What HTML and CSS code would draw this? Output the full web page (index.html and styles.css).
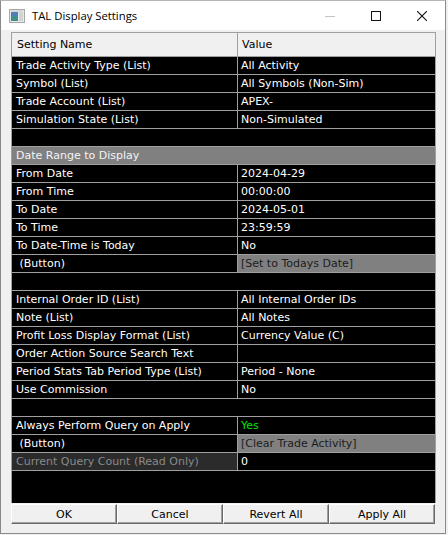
FILE: index.html
```html
<!DOCTYPE html>
<html>
<head>
	<meta charset="utf-8">
	<title>TAL Display Settings</title>
	<link rel="stylesheet" href="styles.css">
</head>
<body>

	<div class="ventana">
		<header class="titulo">
			<svg class="icono" width="16" height="14" viewBox="0 0 16 14">
				<rect x="0.5" y="0.5" width="15" height="13" fill="#e8e8e8" stroke="#a8a8a8"/>
				<rect x="2" y="3" width="7" height="9" fill="#3f8f8a"/>
				<rect x="2" y="3" width="7" height="4" fill="#4a7fb8"/>
				<rect x="10" y="3" width="4" height="9" fill="#cfd6d2"/>
				<rect x="2" y="1.5" width="12" height="1" fill="#c8c8c8"/>
			</svg>
			<span class="texto-titulo">TAL Display Settings</span>
			<div class="controles">
				<span class="control">
					<svg width="10" height="10" viewBox="0 0 10 10"><line x1="0" y1="5.5" x2="10" y2="5.5" stroke="#c4c4c4"/></svg>
				</span>
				<span class="control">
					<svg width="10" height="10" viewBox="0 0 10 10"><rect x="0.5" y="0.5" width="9" height="9" fill="none" stroke="#111"/></svg>
				</span>
				<span class="control">
					<svg width="10" height="10" viewBox="0 0 10 10"><path d="M0 0 L10 10 M10 0 L0 10" stroke="#111" stroke-width="1.1"/></svg>
				</span>
			</div>
		</header>

		<main class="cliente">
			<div class="tabla">
				<div class="fila cabecera"><div class="nombre">Setting Name</div><div class="valor">Value</div></div>

				<div class="fila"><div class="nombre">Trade Activity Type (List)</div><div class="valor">All Activity</div></div>
				<div class="fila"><div class="nombre">Symbol (List)</div><div class="valor">All Symbols (Non-Sim)</div></div>
				<div class="fila"><div class="nombre">Trade Account (List)</div><div class="valor">APEX-</div></div>
				<div class="fila"><div class="nombre">Simulation State (List)</div><div class="valor">Non-Simulated</div></div>
				<div class="fila vacia"></div>

				<div class="fila seccion"><div class="completa">Date Range to Display</div></div>
				<div class="fila"><div class="nombre">From Date</div><div class="valor">2024-04-29</div></div>
				<div class="fila"><div class="nombre">From Time</div><div class="valor">00:00:00</div></div>
				<div class="fila"><div class="nombre">To Date</div><div class="valor">2024-05-01</div></div>
				<div class="fila"><div class="nombre">To Time</div><div class="valor">23:59:59</div></div>
				<div class="fila"><div class="nombre">To Date-Time is Today</div><div class="valor">No</div></div>
				<div class="fila"><div class="nombre">&nbsp;(Button)</div><div class="valor boton-celda">[Set to Todays Date]</div></div>
				<div class="fila vacia"></div>

				<div class="fila"><div class="nombre">Internal Order ID (List)</div><div class="valor">All Internal Order IDs</div></div>
				<div class="fila"><div class="nombre">Note (List)</div><div class="valor">All Notes</div></div>
				<div class="fila"><div class="nombre">Profit Loss Display Format (List)</div><div class="valor">Currency Value (C)</div></div>
				<div class="fila"><div class="nombre">Order Action Source Search Text</div><div class="valor"></div></div>
				<div class="fila"><div class="nombre">Period Stats Tab Period Type (List)</div><div class="valor">Period - None</div></div>
				<div class="fila"><div class="nombre">Use Commission</div><div class="valor">No</div></div>
				<div class="fila vacia"></div>

				<div class="fila"><div class="nombre">Always Perform Query on Apply</div><div class="valor verde">Yes</div></div>
				<div class="fila"><div class="nombre">&nbsp;(Button)</div><div class="valor boton-celda">[Clear Trade Activity]</div></div>
				<div class="fila"><div class="nombre solo-lectura">Current Query Count (Read Only)</div><div class="valor">0</div></div>

				<div class="relleno"></div>
			</div>

			<div class="botones">
				<button>OK</button>
				<button>Cancel</button>
				<button>Revert All</button>
				<button>Apply All</button>
			</div>
		</main>
	</div>

</body>
</html>
```

FILE: styles.css
```css
body{
	margin: 0;
	background: #f0f0f0;
	font-family: 'DejaVu Sans', sans-serif;
	font-size: 11px;
}

/*--------Ventana-----------*/
.ventana{
	width: 446px;
	height: 534px;
	box-sizing: border-box;
	border: 1px solid #8a8a8a;
	border-top-color: #b5b5b5;
	background: #f0f0f0;
	display: flex;
	flex-direction: column;
}
.titulo{
	height: 29px;
	background: #fff;
	display: flex;
	align-items: center;
}
.icono{
	margin-left: 8px;
	margin-top: 1px;
}
.texto-titulo{
	margin-left: 7px;
	font-family: 'Open Sans', sans-serif;
	font-size: 11.3px;
	color: #000;
}
.controles{
	margin-left: auto;
	display: flex;
	height: 100%;
}
.control{
	width: 46px;
	display: flex;
	align-items: center;
	justify-content: center;
}
/*--------Ventana-----------*/

/*--------Tabla-----------*/
.cliente{
	flex: 1;
	padding: 2px 9px 0 10px;
	display: flex;
	flex-direction: column;
}
.tabla{
	height: 471px;
	box-sizing: border-box;
	border: 1px solid #a0a0a0;
	border-bottom: none;
	background: #000;
	display: flex;
	flex-direction: column;
	color: #fff;
}
.fila{
	display: grid;
	grid-template-columns: 226px 1fr;
	height: 18px;
	flex-shrink: 0;
	box-sizing: border-box;
	border-bottom: 1px solid #a0a0a0;
	line-height: 17px;
	white-space: pre;
}
.nombre{
	border-right: 1px solid #a0a0a0;
	padding-left: 4px;
}
.valor{
	padding-left: 3px;
}
.cabecera{
	height: 24px;
	line-height: 23px;
	background: #f0f0f0;
	color: #000;
}
.cabecera .nombre{
	padding-left: 5px;
}
.cabecera .valor{
	padding-left: 4px;
}
.seccion{
	background: #808080;
	color: #f4f4f4;
}
.completa{
	grid-column: 1 / 3;
	padding-left: 4px;
}
.boton-celda{
	background: #808080;
	color: #1c1c1c;
}
.solo-lectura{
	background: #2b2b2b;
	color: #8a8a8a;
}
.verde{
	color: #00e400;
}
.relleno{
	flex: 1;
}
/*--------Tabla-----------*/

/*------------Botones-----------*/
.botones{
	margin-top: 1px;
	width: 424px;
	display: grid;
	grid-template-columns: repeat(4, 1fr);
}
button{
	height: 20px;
	padding: 0;
	font-family: 'DejaVu Sans', sans-serif;
	font-size: 11px;
	color: #000;
	background: #f0f0f0;
	border: 1px solid;
	border-color: #fff #696969 #696969 #fff;
	box-shadow: inset -1px -1px #a0a0a0;
}
/*------------Botones-----------*/
```
